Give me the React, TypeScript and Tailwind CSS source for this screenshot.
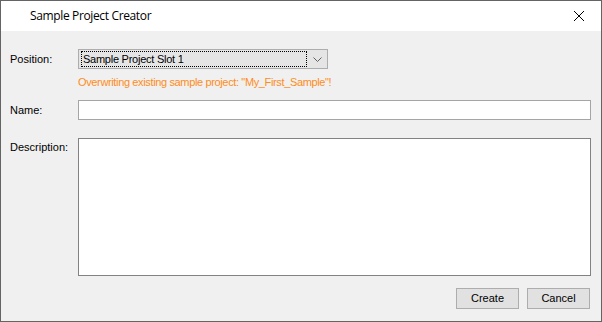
import React from "react";

export default function App() {
  const body = { fontFamily: '"Liberation Sans", Arial, sans-serif' };
  return (
    <div className="w-[602px] h-[322px] border border-[#646464] flex flex-col bg-[#f0f0f0]" style={body}>
      <div className="h-[30px] bg-white flex items-center justify-between shrink-0">
        <span className="pl-[29px] text-[12px] text-black tracking-[-0.36px]" style={{ fontFamily: '"Open Sans", "Noto Sans", sans-serif' }}>
          Sample Project Creator
        </span>
        <svg width="46" height="30" viewBox="0 0 46 30" className="mr-[-1px]">
          <path d="M18 10 L28 20 M28 10 L18 20" stroke="#000" strokeWidth="1" fill="none" />
        </svg>
      </div>
      <div className="flex-1 flex flex-col pl-[9px] pr-[10px] text-[11px] text-black">
        <div className="mt-[18px] flex items-center h-[20px]">
          <span className="w-[68px]">Position:</span>
          <div className="w-[250px] h-[20px] border border-[#adadad] bg-[#e5e5e5] flex items-center">
            <div className="ml-[2px] h-[16px] w-[226px] border border-dotted border-black flex items-center pl-[1px] tracking-[-0.25px]">
              Sample Project Slot 1
            </div>
            <div className="flex-1 flex justify-center">
              <svg width="9" height="5" viewBox="0 0 9 5">
                <path d="M0.5 0.5 L4.5 4.5 L8.5 0.5" stroke="#606060" strokeWidth="1" fill="none" />
              </svg>
            </div>
          </div>
        </div>
        <div className="mt-[7px] pl-[68px] text-[#ff8c1a] h-[13px] leading-[13px] tracking-[-0.36px]">
          Overwriting existing sample project: "My_First_Sample"!
        </div>
        <div className="mt-[11px] flex items-center h-[20px]">
          <span className="w-[68px]">Name:</span>
          <div className="flex-1 h-[20px] border border-[#a5a5a5] bg-white" />
        </div>
        <div className="mt-[18px] flex items-start">
          <span className="w-[68px] pt-[1px]">Description:</span>
          <div className="flex-1 h-[138px] border border-[#828282] bg-white" />
        </div>
        <div className="mt-[12px] flex justify-end gap-[8px] pr-[1px]">
          <div className="w-[63px] h-[21px] border border-[#adadad] bg-[#e1e1e1] flex items-center justify-center">Create</div>
          <div className="w-[63px] h-[21px] border border-[#adadad] bg-[#e1e1e1] flex items-center justify-center">Cancel</div>
        </div>
      </div>
    </div>
  );
}
